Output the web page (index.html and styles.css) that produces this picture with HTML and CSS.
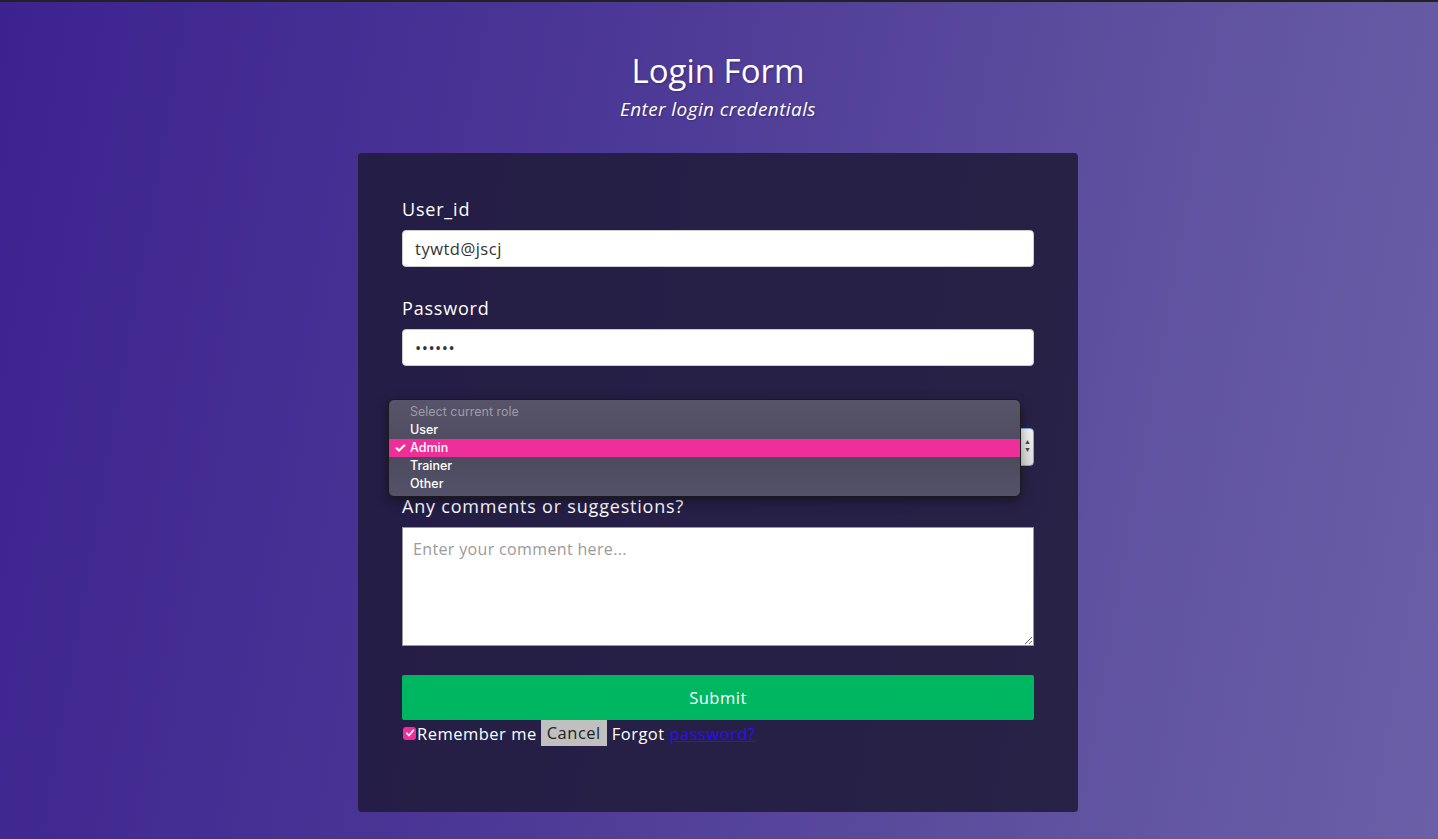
FILE: index.html
```html
<!DOCTYPE html>
<html lang="en">
<head>
<meta charset="utf-8">
<title>Login Form</title>
<link rel="stylesheet" href="styles.css">
</head>
<body>
<div class="topbar"></div>
<div class="page">
<header class="header">
  <h1 class="title">Login Form</h1>
  <p class="subtitle">Enter login credentials</p>
</header>
<main class="card">
  <form class="form">
    <div class="group">
      <label class="label">User_id</label>
      <input class="input" type="text" value="tywtd@jscj">
    </div>
    <div class="group">
      <label class="label">Password</label>
      <input class="input" type="password" value="secret">
    </div>
    <div class="group select-group">
      <label class="label hidden-label">Role</label>
      <div class="select-box"><span class="arrows">&#9650;<br>&#9660;</span></div>
      <ul class="popup">
        <li class="opt disabled">Select current role</li>
        <li class="opt">User</li>
        <li class="opt active"><span class="check">&#10003;</span>Admin</li>
        <li class="opt">Trainer</li>
        <li class="opt">Other</li>
      </ul>
    </div>
    <div class="group comment-group">
      <label class="label">Any comments or suggestions?</label>
      <textarea class="textarea" placeholder="Enter your comment here..."></textarea>
    </div>
    <button class="submit" type="button">Submit</button>
    <div class="row">
      <span class="checkbox"><svg width="10" height="10" viewBox="0 0 10 10"><path d="M1.8 5.2 L4 7.6 L8.4 2.2" fill="none" stroke="#fff" stroke-width="1.6" stroke-linecap="round" stroke-linejoin="round"/></svg></span>
      <span class="remember">Remember me</span>
      <span class="cancel">Cancel</span>
      <span class="forgot">Forgot <a href="#" class="link">password?</a></span>
    </div>
  </form>
</main>
</div>
</body>
</html>
```
FILE: styles.css
```css
* { box-sizing: border-box; }
html, body { height: 100%; }
body {
  margin: 0;
  font-family: "Open Sans", "Noto Sans", sans-serif;
  color: #fff;
  background: linear-gradient(100deg, #3c228f 0%, #4c3896 40%, #5f519f 75%, #6b5fa8 100%);
  min-height: 839px;
  overflow: hidden;
}
.topbar {
  height: 2px;
  background: #222;
}
.page {
  padding-right: 2px;
}
.header {
  text-align: center;
  padding-top: 48px;
}
.title {
  margin: 0;
  font-size: 33px;
  font-weight: 400;
  line-height: 42px;
  text-shadow: 1px 1px 2px rgba(0,0,0,0.25);
}
.subtitle {
  margin: 3px 0 0;
  font-size: 19px;
  font-style: italic;
  line-height: 28px;
  letter-spacing: 0.4px;
  text-shadow: 1px 1px 2px rgba(0,0,0,0.3);
}
.card {
  width: 720px;
  margin: 30px auto 0;
  height: 659px;
  background: rgba(30, 26, 55, 0.85);
  border-radius: 4px;
  padding: 43px 44px;
}
.form {
  display: flex;
  flex-direction: column;
}
.group {
  display: flex;
  flex-direction: column;
  gap: 8px;
  margin-bottom: 28px;
}
.comment-group { margin-bottom: 29px; }
.label {
  font-size: 18px;
  font-weight: 500;
  line-height: 26px;
  letter-spacing: 0.8px;
}
.input {
  height: 37px;
  border: 1px solid #ccc;
  border-radius: 4px;
  padding: 0 12px;
  font-family: inherit;
  font-size: 16.5px;
  letter-spacing: 0.5px;
  color: #333;
  background: #fff;
  outline: none;
}
.select-group { position: relative; margin-bottom: 27px; }
.hidden-label { visibility: hidden; }
.select-box {
  height: 38px;
  border: 1px solid #7aa8e6;
  border-radius: 4px;
  background: linear-gradient(#f2f2f2, #dcdcdc);
  position: relative;
}
.arrows {
  position: absolute;
  right: 2px;
  top: 9px;
  font-size: 7px;
  line-height: 8px;
  color: #444;
}
.popup {
  position: absolute;
  left: -14px;
  top: 5px;
  width: 633px;
  height: 98px;
  margin: 0;
  padding: 3px 0 0;
  list-style: none;
  background: linear-gradient(#57546a, #4d4a5e 60%, #54526a);
  border: 1px solid #1a1a1a;
  border-radius: 6px;
  box-shadow: 0 4px 12px rgba(0,0,0,0.4);
  font-family: "Inter", "Liberation Sans", sans-serif;
  font-size: 12.5px;
  font-weight: 500;
  z-index: 5;
}
.opt {
  height: 18px;
  line-height: 18px;
  padding-left: 21px;
  color: #fff;
  position: relative;
}
.opt.disabled { color: #9e9ba9; font-weight: 400; }
.opt.active { background: #ef2f99; }
.check {
  position: absolute;
  left: 5px;
  font-size: 14px;
  font-weight: 700;
}
.textarea {
  height: 119px;
  border: 1px solid #999;
  padding: 10px 10px;
  font-family: inherit;
  font-size: 16px;
  letter-spacing: 0.35px;
  resize: vertical;
  outline: none;
}
.textarea::placeholder { color: #9a9a9a; }
.submit {
  height: 45px;
  border: none;
  border-radius: 2px;
  background: #00b761;
  color: #fff;
  font-family: inherit;
  font-size: 16.5px;
  letter-spacing: 0.5px;
  font-weight: 500;
}
.row {
  display: flex;
  align-items: center;
  height: 26px;
  font-size: 16.5px;
  letter-spacing: 0.5px;
  font-weight: 500;
}
.checkbox {
  width: 13px;
  height: 13px;
  border-radius: 3px;
  background: #ef2f99;
  margin-left: 1px;
  display: flex;
  align-items: center;
  justify-content: center;
}
.remember { margin-left: 1px; margin-right: 4px; }
.cancel {
  background: #c0c0c0;
  color: #222;
  height: 26px;
  line-height: 26px;
  padding: 0 6px;
  font-weight: 400;
}
.forgot { margin-left: 5px; }
.link { color: #2e0bff; }
```
